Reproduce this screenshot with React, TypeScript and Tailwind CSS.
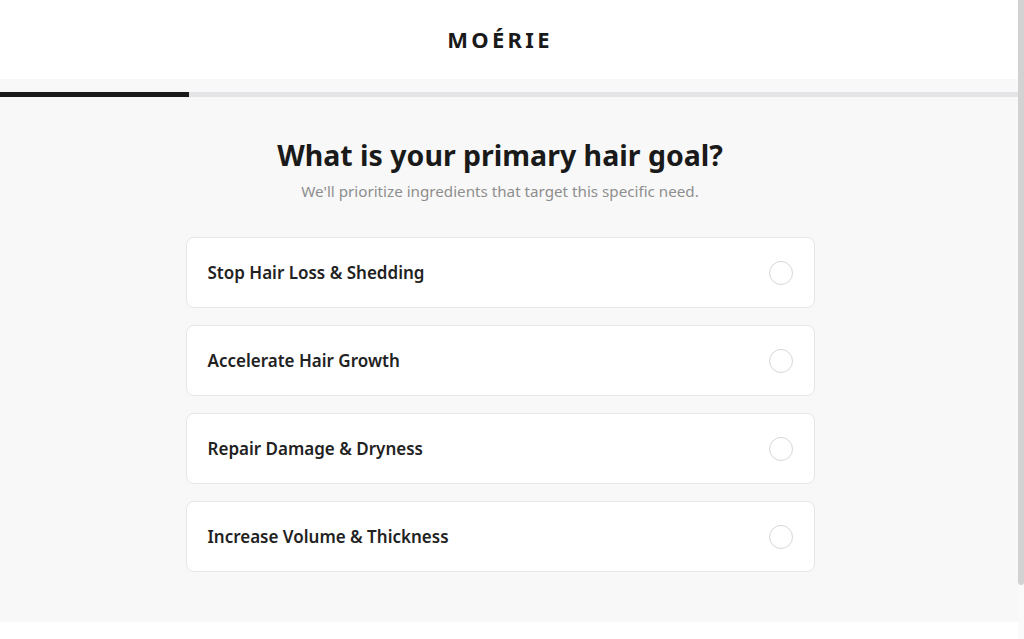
const goals = [
  "Stop Hair Loss & Shedding",
  "Accelerate Hair Growth",
  "Repair Damage & Dryness",
  "Increase Volume & Thickness",
];

export default function App() {
  return (
    <div
      className="flex h-[639px] overflow-hidden bg-white text-[#1c1c1c]"
      style={{ fontFamily: '"Noto Sans", "Open Sans", sans-serif' }}
    >
      <div className="flex-1">
        <header className="flex h-[79px] items-center justify-center bg-white pr-[18px]">
          <span className="text-[22px] font-bold tracking-[0.15em] text-[#1a1a1a]">MOÉRIE</span>
        </header>

        <main className="bg-[#f8f8f8] pt-[13px] pb-[50px]">
          <div className="h-[5px] w-full bg-[#e4e4e6]">
            <div className="h-full w-[189px] bg-[#1a1a1a]" />
          </div>

          <div className="flex flex-col items-center pr-[18px] pt-[40px]">
            <h1 className="text-[28.5px] leading-[36px] font-bold text-[#1a1a1a]">
              What is your primary hair goal?
            </h1>
            <p className="mt-[7px] text-[15.2px] leading-[22px] text-[#8e8e8e]">
              We'll prioritize ingredients that target this specific need.
            </p>

            <ul className="mt-[35px] flex w-[629px] flex-col gap-[17px]">
              {goals.map((g) => (
                <li
                  key={g}
                  className="flex h-[71px] items-center justify-between rounded-lg border border-[#e6e6e6] bg-white px-[21px]"
                >
                  <span className="text-[17px] font-semibold text-[#222]">{g}</span>
                  <span className="h-[24px] w-[24px] rounded-full border-[1.5px] border-[#d6d6d6] bg-white" />
                </li>
              ))}
            </ul>
          </div>
        </main>

        <footer className="h-[76px] bg-white" />
      </div>

      {/* scrollbar */}
      <div className="w-[6px] bg-[#fafafa]">
        <div className="h-[585px] rounded-b-full bg-[#d2d2d2]" />
      </div>
    </div>
  );
}
